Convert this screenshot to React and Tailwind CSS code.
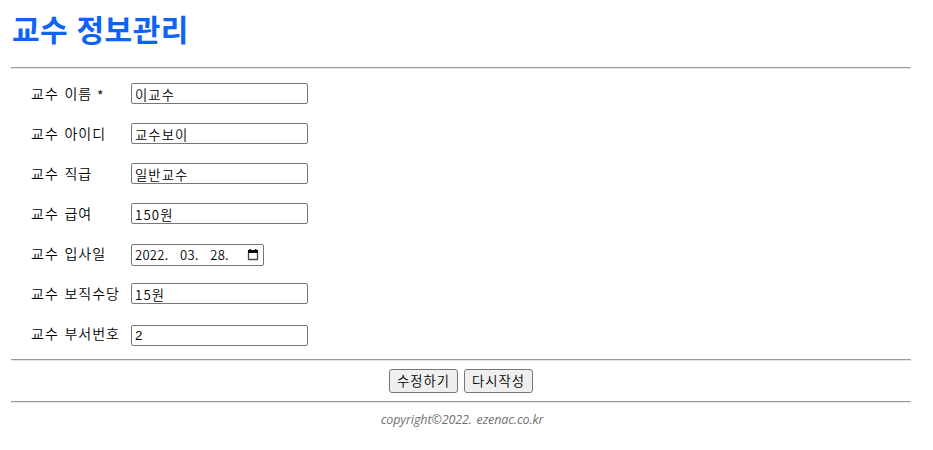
const fields = [
  { label: '교수 이름', required: true, value: '이교수' },
  { label: '교수 아이디', value: '교수보이' },
  { label: '교수 직급', value: '일반교수' },
  { label: '교수 급여', value: '150원' },
  { label: '교수 입사일', value: '2022. 03. 28.', date: true },
  { label: '교수 보직수당', value: '15원' },
  { label: '교수 부서번호', value: '2', latin: true },
];

function Rule() {
  return <div className="h-[2px] w-full border-t border-r border-b border-t-[#999999] border-r-[#e6e6e6] border-b-[#e6e6e6]" />;
}

function CalendarIcon() {
  return (
    <svg width="12" height="12" viewBox="0 0 12 12" className="mb-px shrink-0" fill="none">
      <path d="M1.5 3v7.5h9V3" stroke="#444" strokeWidth="1.3" strokeLinejoin="round" />
      <path d="M1 1h1.5V0H4v1h4V0h1.5v1H11v3H1z" fill="#000" />
    </svg>
  );
}

function Field({ label, required, value, date, latin }) {
  return (
    <div className="flex h-10 items-start">
      <label className="w-[100px] pt-[9px] text-[14px] leading-[20px] font-[350] tracking-[1px] [word-spacing:1.6px] whitespace-pre">
        {label}
        {required && <span className="inline-block translate-x-[-1px] translate-y-[2px] whitespace-pre"> *</span>}
      </label>
      {date ? (
        <div className="mt-[10px] flex h-[22px] w-[133px] items-center justify-between rounded-[2px] border border-[#767676] bg-white pr-[4px] pl-[3px]">
          <span className="text-[13px] leading-[18px] font-[350] tracking-[0.3px] [word-spacing:8.3px] whitespace-pre">{value}</span>
          <CalendarIcon />
        </div>
      ) : (
        <input
          type="text"
          defaultValue={value}
          className={
            latin
              ? "mt-[11px] h-[21px] w-[177px] rounded-[2px] border border-[#767676] bg-white px-[3px] font-['Liberation_Sans',sans-serif] text-[13.33px]"
              : 'mt-[9px] h-[21px] w-[177px] rounded-[2px] border border-[#767676] bg-white px-[3px] pt-[2px] text-[13.33px] font-[350] tracking-[1.1px]'
          }
        />
      )}
    </div>
  );
}

function Button({ children }) {
  return (
    <button className="h-6 w-[69px] rounded-[3px] border border-[#767676] bg-[#efefef] text-center text-[13.33px] leading-[20px] font-[350] tracking-[1px] whitespace-nowrap">
      {children}
    </button>
  );
}

export default function App() {
  return (
    <main className="h-[450px] w-[933px] overflow-hidden bg-white pl-[11px] font-['Noto_Sans_CJK_KR',sans-serif] text-black">
      <div className="w-[900px]">
        <h1 className="h-[67px] pt-[8px] pl-px text-[30px] leading-[40px] font-bold tracking-[0.5px] text-[#0d63f5] [word-spacing:1px] whitespace-nowrap">교수 정보관리</h1>
        <Rule />
        <form className="pt-[5px] pl-5">
          {fields.map((f) => (
            <Field key={f.label} {...f} />
          ))}
        </form>
        <div className="pt-[5px]">
          <Rule />
        </div>
        <div className="flex h-[40px] justify-center gap-[6px] pt-2">
          <Button>수정하기</Button>
          <Button>다시작성</Button>
        </div>
        <Rule />
        <footer className="pt-[7px] pl-[2px] text-center font-['Open_Sans',sans-serif] text-[12.5px] leading-[20px] tracking-[-0.1px] text-[#707070] italic [word-spacing:1.5px]">
          copyright©2022. ezenac.co.kr
        </footer>
      </div>
    </main>
  );
}
